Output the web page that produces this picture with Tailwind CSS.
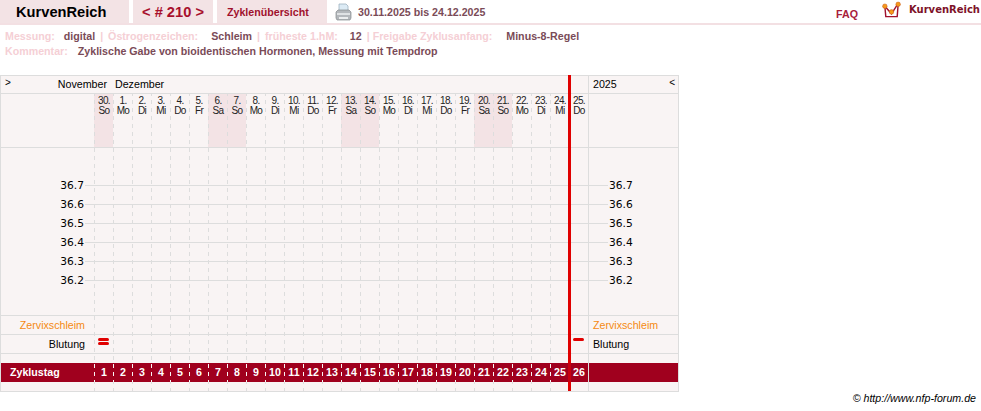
<!DOCTYPE html>
<html lang="de">
  <head>
    <meta charset="UTF-8" />
    <title>KurvenReich</title>
    <script src="https://cdn.jsdelivr.net/npm/@tailwindcss/browser@4"></script>
  </head>
  <body class="bg-white w-[981px] h-[411px] overflow-hidden relative font-['Liberation_Sans',Arial,sans-serif] text-[10.67px] leading-none">
    <!-- Kopfzeile -->
    <div class="flex h-[25px] border-b-2 border-[#f3e0e3] items-stretch">
      <div class="w-[129px] bg-[#f3e3e5] flex items-center pl-[16px] pt-[2px] font-bold text-[14.67px] text-black">KurvenReich</div>
      <div class="w-[80px] ml-[4px] bg-[#f3e3e5] flex items-center justify-center pt-[2px] font-bold text-[14.67px] text-[#a8102c]">&lt; # 210 &gt;</div>
      <div class="w-[110px] ml-[4px] bg-[#f3e3e5] flex items-center pl-[10px] pt-[2px] font-bold text-[#a0112d]">Zyklenübersicht</div>
      <svg class="ml-[8px] mt-[3px]" width="17" height="18" viewBox="0 0 17 18">
        <path d="M4 1h7l2 2v6H4z" fill="#dcebf5" stroke="#9fb2c0" stroke-width=".8" />
        <path d="M1 9l2-2h11l2 2v6l-1 2H2l-1-2z" fill="#b4b8bc" stroke="#85898e" stroke-width=".7" />
        <rect x="2" y="10" width="13" height="2" fill="#dfe2e4" />
        <rect x="4" y="14" width="9" height="2" fill="#eceeef" />
      </svg>
      <div class="ml-[6px] flex items-center pt-[2px] font-bold text-[#7a4b57]">30.11.2025 bis 24.12.2025</div>
      <div class="ml-auto mr-[24px] flex items-end pb-[3px] font-bold text-[#a8203a]">FAQ</div>
      <svg class="mt-[1px]" width="19" height="18" viewBox="0 0 20 18">
        <path d="M3 5l1 11h12l1-13" fill="none" stroke="#a0112d" stroke-width="1.5" />
        <path d="M3 5l7 8 7-11" fill="none" stroke="#a0112d" stroke-width="1.5" />
        <circle cx="3" cy="5" r="2.4" fill="#f59a1c" stroke="#c8551a" stroke-width=".5" />
        <circle cx="10" cy="11" r="2.4" fill="#f59a1c" stroke="#c8551a" stroke-width=".5" />
        <circle cx="17" cy="3" r="2.4" fill="#f59a1c" stroke="#c8551a" stroke-width=".5" />
      </svg>
      <div class="ml-[8px] mr-[1px] mt-[5px] font-['DejaVu_Sans'] font-bold text-[10px] text-[#7d1228]">KurvenReich</div>
    </div>

    <!-- Zyklusdaten -->
    <div class="pl-[5px] pt-[4px] font-bold text-[#f5cfd5] whitespace-nowrap">
      <div class="h-[15px] flex items-center">
        <span>Messung:</span><span class="ml-[9px] text-[#7a4b57]">digital</span>
        <span class="ml-[5px]">|</span><span class="ml-[5px]">Östrogenzeichen:</span><span class="ml-[13px] text-[#7a4b57]">Schleim</span>
        <span class="ml-[5px]">|</span><span class="ml-[5px]">früheste 1.hM:</span><span class="ml-[12px] text-[#7a4b57]">12</span>
        <span class="ml-[5px]">|</span><span class="ml-[3px]">Freigabe Zyklusanfang:</span><span class="ml-[14px] text-[#7a4b57]">Minus-8-Regel</span>
      </div>
      <div class="h-[15px] flex items-center">
        <span>Kommentar:</span><span class="ml-[10px] text-[#7a4b57]">Zyklische Gabe von bioidentischen Hormonen, Messung mit Tempdrop</span>
      </div>
    </div>

    <!-- Kurvenblatt -->
    <div class="absolute left-0 top-[75px] w-[679px] h-[317px] border border-[#dddddd] bg-[#f9f4f4] text-black">
      <div class="h-[18px] flex items-center border-b border-[#dddddd] relative">
        <span class="absolute left-[4px] top-[2px] text-[10px]">&gt;</span>
        <span class="w-[106px] text-right">November</span>
        <span class="ml-[8px]">Dezember</span>
        <div class="absolute left-[587px] top-0 bottom-0 border-l border-[#dddddd] pl-[4px] flex items-center w-[90px]">2025<span class="absolute right-[3px] top-[2px] text-[10px]">&lt;</span></div>
      </div>
      <div id="tage" class="h-[54px] flex border-b border-[#dddddd]"></div>
      <div class="h-[168px] relative border-b border-[#dddddd]">
        <div id="gitter" class="absolute inset-0 flex"></div>
        <div id="temp" class="absolute left-0 right-0 top-[28px]"></div>
      </div>
      <div class="h-[19px] flex border-b border-[#dddddd] text-[#f58a12]" data-zeile="Zervixschleim"></div>
      <div class="h-[19px] flex border-b border-[#dddddd] text-black relative" data-zeile="Blutung">
        <span class="absolute left-[97px] top-[3px] w-[11px] h-[3px] rounded-full bg-[#e00000]"></span>
        <span class="absolute left-[97px] top-[7px] w-[11px] h-[3px] rounded-full bg-[#e00000]"></span>
        <span class="absolute left-[572px] top-[3px] w-[11px] h-[3px] rounded-full bg-[#e00000]"></span>
      </div>
      <div class="h-[9px] flex" data-zeile=""></div>
      <div id="zyklustag" class="h-[19px] flex bg-[#a0001e] font-bold text-white"></div>
      <div class="h-[9px] flex" data-zeile=""></div>
      <div class="absolute left-[567px] top-[-1px] w-[3px] h-[316px] bg-[#e00000]">
        <div class="absolute left-0 right-0 top-[288px] h-[19px] bg-[#c80010]"></div>
      </div>
    </div>

    <div class="absolute right-[5px] top-[393px] italic text-black">© http://www.nfp-forum.de</div>

    <script>
      const tage = [["30.", "So"], ["1.", "Mo"], ["2.", "Di"], ["3.", "Mi"], ["4.", "Do"], ["5.", "Fr"], ["6.", "Sa"], ["7.", "So"], ["8.", "Mo"], ["9.", "Di"], ["10.", "Mi"], ["11.", "Do"], ["12.", "Fr"], ["13.", "Sa"], ["14.", "So"], ["15.", "Mo"], ["16.", "Di"], ["17.", "Mi"], ["18.", "Do"], ["19.", "Fr"], ["20.", "Sa"], ["21.", "So"], ["22.", "Mo"], ["23.", "Di"], ["24.", "Mi"], ["25.", "Do"]]

      // bg-fixed keeps the 4px dashes in phase from one row to the next
      const strich = '<div class="w-[1px] shrink-0 bg-fixed bg-[repeating-linear-gradient(to_bottom,transparent_0_4px,#dddddd_4px_8px)]"></div>'
      const strichHell = '<div class="w-[1px] shrink-0 bg-fixed bg-[repeating-linear-gradient(to_bottom,transparent_0_4px,#f9f4f4_4px_8px)]"></div>'

      const leer = '<div class="w-[93px] shrink-0"></div>'
      const spalte = `<div class="w-[19px] shrink-0 flex">${strich}</div>`
      const rest = '<div class="flex-1 border-l border-[#dddddd]"></div>'

      document.getElementById("tage").innerHTML = leer + tage.map(([tag, name]) => {
        const frei = name === "Sa" || name === "So"
        return `<div class="w-[19px] shrink-0 flex ${frei ? "bg-[#f3e3e5]" : ""}">${strich}<div class="w-[18px] text-center text-[10px] leading-[10px] tracking-[-0.6px] pt-[2px] text-[#222222]">${tag}<br />${name}</div></div>`
      }).join("") + rest

      document.getElementById("gitter").innerHTML = leer + tage.map(() => spalte).join("") + rest

      document.getElementById("temp").innerHTML = ["36.7", "36.6", "36.5", "36.4", "36.3", "36.2"].map(t => `
        <div class="h-[19px] flex items-center relative">
          <div class="absolute left-[84px] right-[68px] top-[9px] border-t border-[#dddddd]"></div>
          <span class="relative w-[83px] text-right pt-[1px] font-['DejaVu_Sans'] text-[10.67px] bg-[#f9f4f4]">${t}</span>
          <span class="absolute left-[607px] px-[1px] pt-[1px] font-['DejaVu_Sans'] text-[10.67px] bg-[#f9f4f4]">${t}</span>
        </div>`).join("")

      document.querySelectorAll("[data-zeile]").forEach(z => {
        const titel = z.dataset.zeile
        z.insertAdjacentHTML("afterbegin",
          `<div class="w-[93px] shrink-0 text-right pr-[9px] flex items-center justify-end">${titel}</div>` +
          tage.map(() => spalte).join("") +
          `<div class="flex-1 border-l border-[#dddddd] flex items-center pl-[4px]">${titel}</div>`)
      })

      document.getElementById("zyklustag").innerHTML =
        '<div class="w-[93px] shrink-0 pl-[9px] flex items-center">Zyklustag</div>' +
        tage.map((_, i) => `<div class="w-[19px] shrink-0 flex">${strichHell}<div class="w-[18px] flex items-center justify-center">${i + 1}</div></div>`).join("") +
        '<div class="flex-1 border-l border-[#dddddd]"></div>'
    </script>
  </body>
</html>
